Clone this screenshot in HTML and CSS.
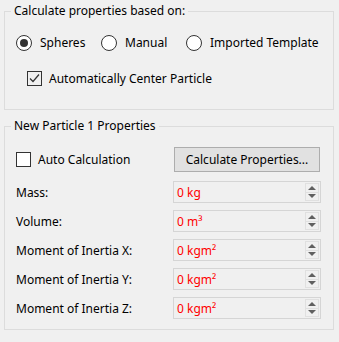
FILE: index.html
```html
<!DOCTYPE html>
<html lang="en">
<head>
    <meta charset="UTF-8">
    <title>Particle Properties</title>
    <link rel="stylesheet" href="styles.css">
</head>
<body>

<fieldset class="group group-based">
    <legend>Calculate properties based on:</legend>

    <div class="radio-row">
        <label class="option"><span class="radio checked"></span>Spheres</label>
        <label class="option"><span class="radio"></span>Manual</label>
        <label class="option"><span class="radio"></span>Imported Template</label>
    </div>

    <label class="check-line center-check">
        <span class="checkbox">
            <svg width="13" height="13" viewBox="0 0 13 13"><path d="M2 6.5 L5 9.5 L11 2.5" fill="none" stroke="#333" stroke-width="1.2"/></svg>
        </span>
        Automatically Center Particle
    </label>
</fieldset>

<fieldset class="group group-props">
    <legend>New Particle 1 Properties</legend>

    <div class="props">
        <label class="check-line"><span class="checkbox"></span>Auto Calculation</label>
        <button class="calc-btn">Calculate Properties...</button>

        <span class="prop-label">Mass:</span>
        <div class="spin"><span class="spin-value">0 kg</span><span class="spin-btns"><span class="up"></span><span class="down"></span></span></div>

        <span class="prop-label">Volume:</span>
        <div class="spin"><span class="spin-value">0 m³</span><span class="spin-btns"><span class="up"></span><span class="down"></span></span></div>

        <span class="prop-label">Moment of Inertia X:</span>
        <div class="spin"><span class="spin-value">0 kgm²</span><span class="spin-btns"><span class="up"></span><span class="down"></span></span></div>

        <span class="prop-label">Moment of Inertia Y:</span>
        <div class="spin"><span class="spin-value">0 kgm²</span><span class="spin-btns"><span class="up"></span><span class="down"></span></span></div>

        <span class="prop-label">Moment of Inertia Z:</span>
        <div class="spin"><span class="spin-value">0 kgm²</span><span class="spin-btns"><span class="up"></span><span class="down"></span></span></div>
    </div>
</fieldset>

</body>
</html>
```

FILE: styles.css
```css
body {
    margin: 0;
    padding: 3px 5px 0 4px;
    background: #f0f0f0;
    font-family: "Noto Sans", "Open Sans", sans-serif;
    font-size: 12px;
    color: #000;
}

.group {
    margin: 0;
    border: 1px solid #dcdcdc;
    min-width: 0;
}

.group legend {
    margin-left: -5px;
    padding: 0 3px 0 3px;
    line-height: 16px;
}

.group-based {
    padding: 15px 11px 23px 11px;
}

.group-props {
    margin-top: 8px;
    padding: 13px 11px 10px 11px;
}

.radio-row {
    display: grid;
    grid-template-columns: 85px 85px auto;
    height: 16px;
}

.option {
    display: flex;
    align-items: center;
    gap: 8px;
}

.radio {
    width: 14px;
    height: 14px;
    border: 1px solid #333;
    border-radius: 50%;
    background: #fff;
    box-sizing: content-box;
    display: flex;
    align-items: center;
    justify-content: center;
}

.radio.checked::after {
    content: "";
    width: 8px;
    height: 8px;
    border-radius: 50%;
    background: #333;
}

.check-line {
    display: flex;
    align-items: center;
    gap: 7px;
}

.center-check {
    margin: 21px 0 0 11px;
    height: 15px;
}

.checkbox {
    width: 13px;
    height: 13px;
    border: 1px solid #333;
    background: #fff;
    display: flex;
}

.center-check .checkbox {
    background: transparent;
}

.props {
    display: grid;
    grid-template-columns: 157px 148px;
    grid-template-rows: 27px;
    grid-auto-rows: 22px;
    row-gap: 7px;
    align-items: center;
}

.props .check-line {
    align-self: start;
    height: 25px;
}

.calc-btn {
    align-self: start;
    justify-self: start;
    margin-left: 1px;
    width: 146px;
    height: 25px;
    border: 1px solid #adadad;
    background: #e1e1e1;
    font-family: inherit;
    font-size: 12px;
    padding: 0;
    color: #000;
}

.spin {
    height: 22px;
    box-sizing: border-box;
    border: 1px solid #d5d5d5;
    display: flex;
    align-items: center;
    justify-content: space-between;
    padding: 0 1px 0 3px;
}

.spin-value {
    color: #ff0000;
}

.spin-btns {
    display: flex;
    flex-direction: column;
    width: 14px;
    height: 18px;
}

.spin-btns span {
    flex: 1;
    border: 1px solid #e0e0e0;
    display: flex;
    align-items: center;
    justify-content: center;
}

.spin-btns .down {
    border-top: none;
}

.spin-btns .up::after {
    content: "";
    border-left: 4px solid transparent;
    border-right: 4px solid transparent;
    border-bottom: 4px solid #606060;
}

.spin-btns .down::after {
    content: "";
    border-left: 4px solid transparent;
    border-right: 4px solid transparent;
    border-top: 4px solid #606060;
}
```
